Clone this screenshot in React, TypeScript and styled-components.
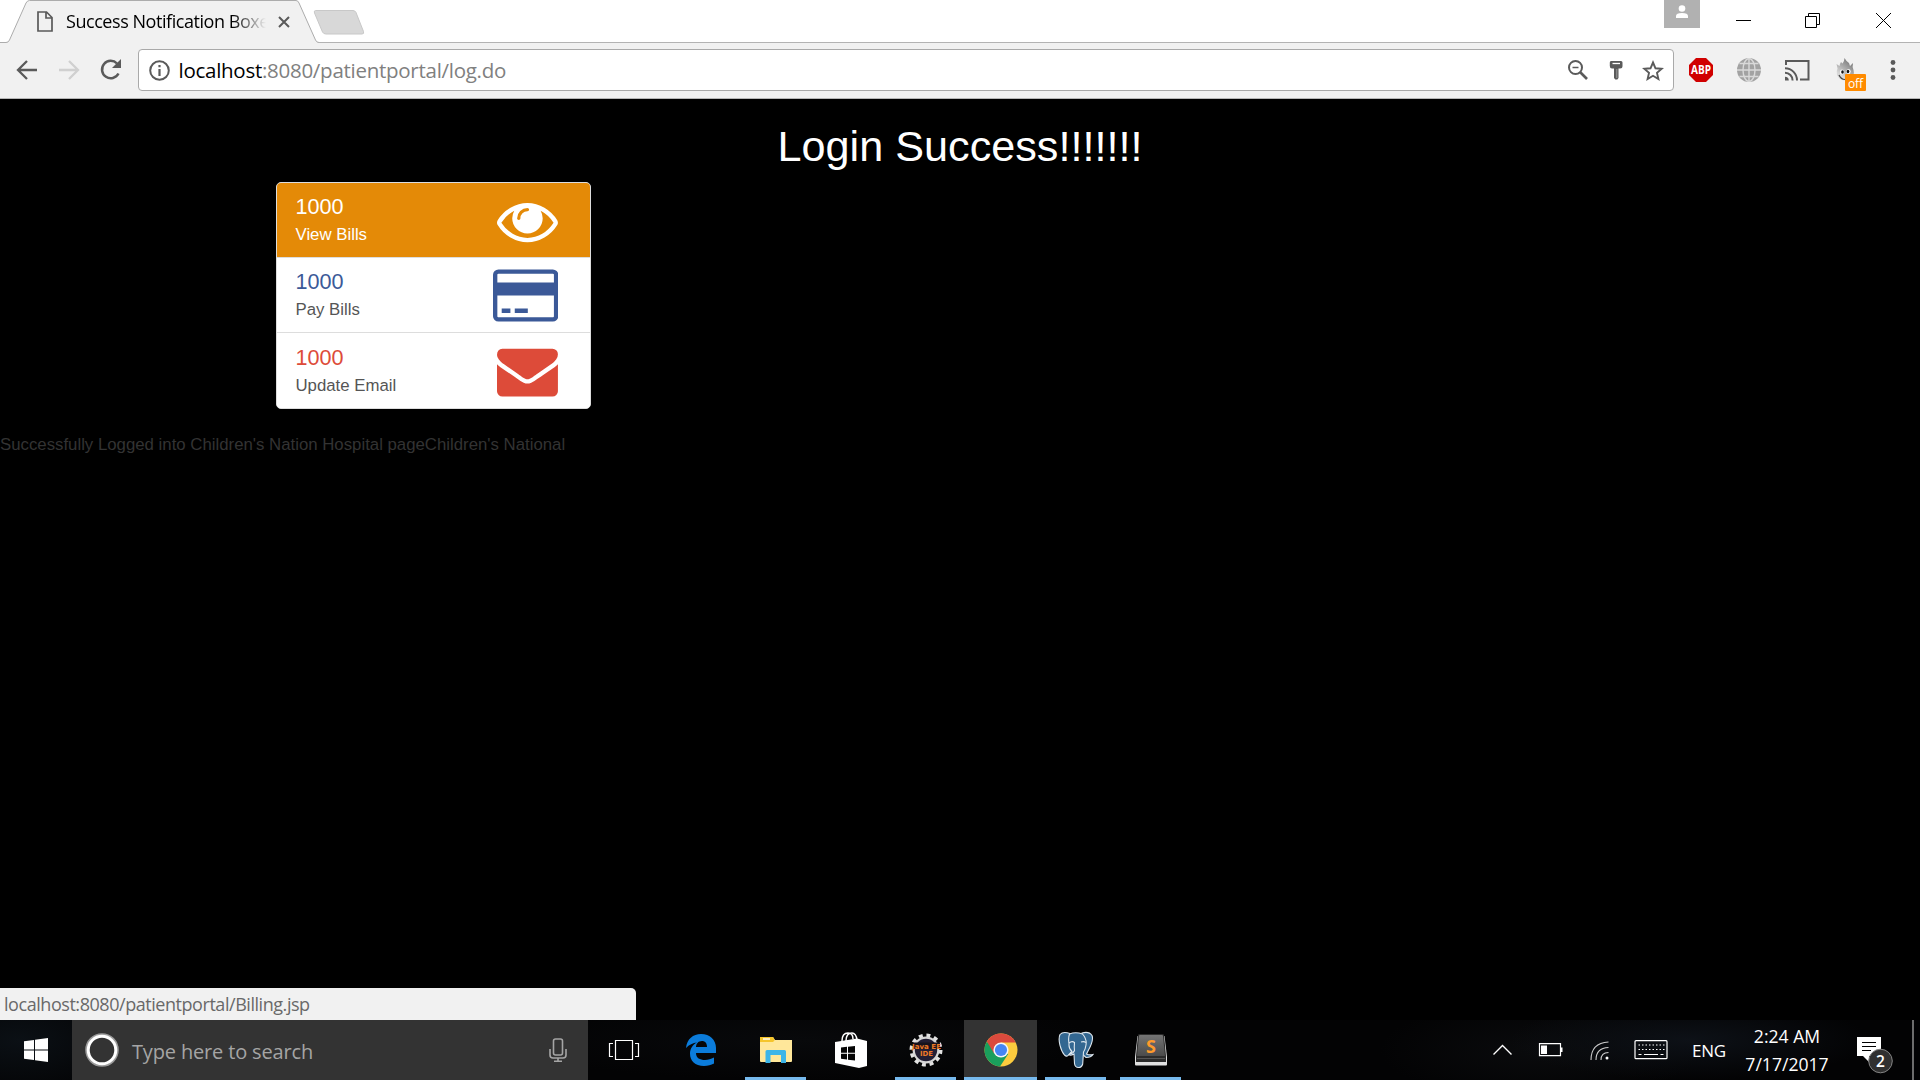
import React from "react";
import styled, { createGlobalStyle } from "styled-components";

const Global = createGlobalStyle`
  * { box-sizing: border-box; }
  body { margin: 0; background: #000; overflow: hidden; }
  svg { display: block; flex: none; }
`;

const ui = `"Open Sans", "Noto Sans", sans-serif`;
const arial = `"Liberation Sans", Arial, sans-serif`;

const Screen = styled.div`
  width: 1920px;
  height: 1080px;
  display: flex;
  flex-direction: column;
  background: #000;
  overflow: hidden;
`;

/* ---------- browser chrome ---------- */

const TabStrip = styled.header`
  height: 43px;
  flex: none;
  display: flex;
  align-items: flex-start;
  background: #fff;
  box-shadow: inset 0 -1px 0 #b3b3b3;
`;

const Tab = styled.div`
  position: relative;
  width: 320px;
  height: 43px;
  padding-left: 37px;
  display: flex;
  align-items: center;
`;

const TabShape = styled.svg`
  position: absolute;
  left: 0;
  top: 0;
`;

const TabTitle = styled.span`
  position: relative;
  width: 204px;
  margin-left: 13px;
  padding-bottom: 2px;
  white-space: nowrap;
  font: 18px/28px ${ui};
  letter-spacing: -0.45px;
  color: #000;
  mask-image: linear-gradient(to right, #000 166px, transparent 200px);
`;

const Lifted = styled.div`
  position: relative;
`;

const TabClose = styled(Lifted)`
  margin-left: 8px;
`;

const NewTab = styled.svg`
  margin: 9px 0 0 -7px;
`;

const WindowButtons = styled.div`
  margin-left: auto;
  display: flex;
  align-items: flex-start;
`;

const ProfileButton = styled.div`
  width: 36px;
  height: 28px;
  margin-right: 9px;
  background: #b1b1b1;
  display: flex;
  justify-content: center;
  padding-top: 5px;
`;

const WindowButton = styled.div<{ $w: number }>`
  width: ${(p) => p.$w}px;
  height: 41px;
  display: flex;
  align-items: center;
  justify-content: center;
`;

const Toolbar = styled.div`
  height: 56px;
  flex: none;
  display: flex;
  align-items: center;
  background: #f1f1f1;
  border-bottom: 1px solid #b6b6b6;
  padding: 0 15px 1px 16px;
`;

const NavButtons = styled.div`
  display: flex;
  flex: none;
  align-items: center;
  gap: 20px;
  width: 122px;
`;

const AddressBar = styled.div`
  width: 1536px;
  flex: none;
  height: 42px;
  display: flex;
  align-items: center;
  background: #fff;
  border: 1px solid #a9a9a9;
  border-radius: 4px;
  padding: 0 9px 0 10px;
`;

const Url = styled.span`
  margin-left: 8.5px;
  font: 20.5px/30px ${ui};
  letter-spacing: -0.27px;
  color: #808080;
  b { color: #000; font-weight: 400; }
`;

const AddressActions = styled.div`
  margin-left: auto;
  display: flex;
  align-items: center;
`;

const Extensions = styled.div`
  flex: 1;
  display: flex;
  align-items: center;
  gap: 24px;
  padding-left: 15px;
`;

const FlameSlot = styled.div`
  margin: 9px -10px 0 2px;
`;

/* ---------- page ---------- */

const Page = styled.main`
  flex: 1;
  display: flex;
  flex-direction: column;
  align-items: flex-start;
  font-family: ${arial};
`;

const Heading = styled.h1`
  align-self: center;
  margin: 24px 0 12px;
  font-size: 43.2px;
  line-height: 47px;
  font-weight: 400;
  color: #fff;
`;

const Menu = styled.div`
  width: 315px;
  margin-left: 276px;
  border: 1px solid #ddd;
  border-radius: 5px;
  background: #fff;
  overflow: hidden;
`;

const MenuItem = styled.a<{ $fill?: boolean; $h: number; $top: number }>`
  height: ${(p) => p.$h}px;
  display: flex;
  justify-content: space-between;
  padding: ${(p) => p.$top}px 32px 0 18.5px;
  background: ${(p) => (p.$fill ? "#e48a07" : "#fff")};
  color: ${(p) => (p.$fill ? "#fff" : "#555")};
  & + & { border-top: 1px solid #ddd; }
`;

const Count = styled.h4<{ $c: string }>`
  margin: 0;
  font-size: 21.6px;
  line-height: 25px;
  font-weight: 400;
  color: ${(p) => p.$c};
`;

const Label = styled.p`
  margin: 4px 0 0;
  font-size: 16.8px;
  line-height: 24px;
`;

const MenuIcon = styled.svg<{ $c: string; $up: number }>`
  margin-top: ${(p) => -p.$up}px;
  fill: ${(p) => p.$c};
`;

const Footnote = styled.p`
  margin: 24px 0 0;
  font-size: 16.8px;
  line-height: 24px;
  color: #333;
`;

const StatusBubble = styled.div`
  width: 636px;
  height: 32px;
  margin-top: auto;
  padding-left: 4px;
  background: #f1f1f1;
  border-top-right-radius: 5px;
  font: 18px/32px ${ui};
  letter-spacing: -0.45px;
  color: #696969;
`;

/* ---------- taskbar ---------- */

const Taskbar = styled.footer`
  height: 60px;
  flex: none;
  display: flex;
  color: #fff;
  font-family: ${ui};
  background:
    radial-gradient(ellipse 180px 40px at 1690px 20px, #0d1117, transparent),
    radial-gradient(ellipse 160px 50px at 1540px 30px, #0a0b0d, transparent),
    radial-gradient(ellipse 130px 60px at 20px 20px, #0b1015, transparent),
    radial-gradient(ellipse 300px 40px at 800px 20px, #08090b, transparent),
    #030304;
`;

const Start = styled.div`
  width: 72px;
  display: flex;
  align-items: center;
  justify-content: center;
`;

const Search = styled.div`
  width: 516px;
  background: #333;
  display: flex;
  align-items: center;
  padding: 0 21px 0 13px;
`;

const Placeholder = styled.span`
  flex: 1;
  margin: 2px 0 0 13px;
  font-size: 20px;
  letter-spacing: -0.16px;
  color: #a5a5a5;
`;

const Slot = styled.div<{ $open?: boolean; $active?: boolean; $nudge?: number }>`
  width: 75px;
  padding-right: ${(p) => p.$nudge ?? 0}px;
  display: flex;
  align-items: center;
  justify-content: center;
  background:
    linear-gradient(#76b9ed, #76b9ed) center bottom /
      ${(p) => (p.$active ? 73 : p.$open ? 61 : 0)}px 3px no-repeat,
    linear-gradient(${(p) => (p.$active ? "#333, #333" : "transparent, transparent")})
      center / 73px 100% no-repeat;
`;

const Tray = styled.div`
  margin-left: auto;
  display: flex;
  align-items: center;
`;

const Language = styled.span`
  width: 34px;
  margin-left: 24px;
  font-size: 17px;
  letter-spacing: -0.3px;
`;

const Clock = styled.div`
  width: 100px;
  margin-left: 11px;
  text-align: center;
  font-size: 17.6px;
  line-height: 28px;
  padding-bottom: 1px;
  white-space: nowrap;
`;

const Notifications = styled.div`
  padding-top: 8px;
`;

const Edge = styled.div`
  width: 2px;
  height: 60px;
  margin: 0 6px 0 19px;
  background: #6d6d6d;
`;

const g = "#5a5a5a";

const Extension = {
  abp: (
    <svg width="24" height="24" viewBox="0 0 24 24">
      <path d="M7 0h10l7 7v10l-7 7H7l-7-7V7z" fill="#d00000" />
      <text x="12" y="16.2" textAnchor="middle" fontFamily="Open Sans" fontWeight="700" fontSize="11.5" textLength="20" lengthAdjust="spacingAndGlyphs" fill="#fff">ABP</text>
    </svg>
  ),
  globe: (
    <svg width="24" height="24" viewBox="0 0 24 24">
      <circle cx="12" cy="12" r="12" fill="#a2a2a2" />
      <g fill="none" stroke="#d9d9d9" strokeWidth="1.4">
        <ellipse cx="12" cy="12" rx="6" ry="11.5" />
        <path d="M12 0v24M0 12h24M2.5 5.5h19M2.5 18.5h19" />
      </g>
    </svg>
  ),
  cast: (
    <svg width="25" height="21" viewBox="0 0 25 21" fill="none" stroke={g} strokeWidth="2">
      <path d="M1 5V1h22.5v18.5H15" />
      <path d="M0 8.3A12 12 0 0 1 12 20.5M0 12.7a7.7 7.7 0 0 1 7.6 7.8" />
      <path d="M0 16.8a3.8 3.8 0 0 1 3.8 3.7H0z" fill={g} stroke="none" />
    </svg>
  ),
  hola: (
    <svg width="31" height="34" viewBox="0 0 31 34">
      <defs>
        <linearGradient id="flame" x1=".8" y1="0" x2=".3" y2=".8">
          <stop offset="0" stopColor="#6c6c6c" />
          <stop offset="1" stopColor="#d8d8d8" />
        </linearGradient>
      </defs>
      <path d="M8.500 0Q10 3 13 5l1 3 3-3q-1 4 .5 7 1 3-.5 6-2 4.500-8 4.500-6-.5-8-5.500-1-4 .5-6.500Q1 8 .5 6l3 2q.2-2 1.500-4l1.500 1.500Q8.500 3 8.500 0z" fill="url(#flame)" />
      <ellipse cx="6" cy="14" rx="2.200" ry="2.600" fill="#fff" />
      <ellipse cx="12.500" cy="13.500" rx="2.200" ry="2.600" fill="#fff" />
      <ellipse cx="6.500" cy="14" rx="1.300" ry="1.800" fill="#111" />
      <ellipse cx="12" cy="13.500" rx="1.300" ry="1.800" fill="#111" />
      <path d="M3 17q2 4.500 6 4.500" fill="none" stroke="#444" strokeWidth="1.200" />
      <rect x="9" y="16" width="21" height="17" rx="1" fill="#ff8b00" />
      <text x="19.5" y="30" textAnchor="middle" fontFamily="Open Sans" fontSize="12" textLength="15" fill="#fff">off</text>
    </svg>
  ),
};

function BrowserTop() {
  return (
    <>
      <TabStrip>
        <Tab>
          <TabShape width="322" height="43">
            <path d="M0 42.5H6q2.5 0 3.5-2.5L26 3Q27.300 .5 29.500 .5H296q2 0 3 2.500L315.500 40q1 2.500 3.500 2.500V43H0z" fill="#f1f1f1" />
            <path d="M0 42.500H6q2.500 0 3.500-2.500L26 3Q27.300 .5 29.500 .5H296q2 0 3 2.500L315.500 40q1 2.500 3.500 2.500" fill="none" stroke="#acacac" />
          </TabShape>
          <Lifted>
            <svg width="16" height="21" viewBox="0 0 16 21" fill="none" stroke={g} strokeWidth="1.7">
              <path d="M1 1h8.500L15 6.500V20H1zM9 1v6h6" />
            </svg>
          </Lifted>
          <TabTitle>Success Notification Boxe</TabTitle>
          <TabClose>
            <svg width="12" height="12" viewBox="0 0 12 12" stroke={g} strokeWidth="2">
              <path d="M1 1l10 10M11 1L1 11" />
            </svg>
          </TabClose>
        </Tab>
        <NewTab width="52" height="27">
          <path d="M2.500 1.500H40q2 0 3 2L50.500 22.500q.8 2.500-1.500 2.500H13q-2.500 0-3.500-2L1.500 4q-.8-2.500 1-2.500z" fill="#d8d8d8" stroke="#c8c8c8" />
        </NewTab>
        <WindowButtons>
          <ProfileButton>
            <svg width="14" height="14" viewBox="0 0 14 14" fill="#fff">
              <circle cx="7" cy="3.500" r="3.300" />
              <path d="M1 13v-2q0-3 6-3t6 3v2z" />
            </svg>
          </ProfileButton>
          <WindowButton $w={69}>
            <svg width="15" height="15"><path d="M0 7.500h15" stroke="#000" /></svg>
          </WindowButton>
          <WindowButton $w={69}>
            <svg width="15" height="15" fill="none" stroke="#000">
              <path d="M.5 3.500h11v11H.5zM3.500 3.500v-3h11v11h-3" />
            </svg>
          </WindowButton>
          <WindowButton $w={73}>
            <svg width="15" height="15" stroke="#000"><path d="M0 0l15 15M15 0L0 15" /></svg>
          </WindowButton>
        </WindowButtons>
      </TabStrip>

      <Toolbar>
        <NavButtons>
          <svg width="22" height="20" viewBox="0 0 22 20" fill="none" stroke={g} strokeWidth="2.300">
            <path d="M21 10H3M11 1l-9 9 9 9" />
          </svg>
          <svg width="22" height="20" viewBox="0 0 22 20" fill="none" stroke="#d0d0d0" strokeWidth="2.300">
            <path d="M1 10h18M11 1l9 9-9 9" />
          </svg>
          <svg width="22" height="22" viewBox="0 0 22 22">
            <path d="M18.500 14.500A8.700 8.700 0 1 1 17 4.500" fill="none" stroke={g} strokeWidth="2.500" />
            <path d="M21 0v9h-9z" fill={g} />
          </svg>
        </NavButtons>
        <AddressBar>
          <svg width="21" height="21" viewBox="0 0 21 21">
            <circle cx="10.500" cy="10.500" r="9.300" fill="none" stroke={g} strokeWidth="2" />
            <path d="M9.400 5h2.200v2.200H9.400zM9.400 9h2.200v7H9.400z" fill={g} />
          </svg>
          <Url><b>localhost</b>:8080/patientportal/log.do</Url>
          <AddressActions>
            <svg width="20" height="20" viewBox="0 0 20 20" fill="none" stroke={g}>
              <circle cx="7.500" cy="7.500" r="6.500" strokeWidth="2" />
              <path d="M4.500 7.500h6" strokeWidth="1.500" />
              <path d="M12 12l7 7" strokeWidth="2.600" />
            </svg>
            <svg width="54" height="20" viewBox="0 0 54 20">
              <path d="M23 1h10q1.500 0 1.500 1.500V6q0 2.500-2.500 2.500h-8Q21.800 8.500 21.800 6V2.500Q21.800 1 23 1zM26 8h4.500v10l-1.200 1.500h-2L26 18z" fill={g} />
              <path d="M24.500 3.500h7.500" stroke="#fff" strokeWidth="1.300" />
              <path d="M28.800 9v9" stroke="#999" />
            </svg>
            <svg width="22" height="21" viewBox="0 0 22 21" fill="none" stroke={g} strokeWidth="1.900">
              <path d="M11 2.500l2.500 5.800 6.200.5-4.700 4.100 1.400 6.100L11 15.800 5.600 19 7 12.900 2.300 8.800l6.200-.5z" />
            </svg>
          </AddressActions>
        </AddressBar>
        <Extensions>
          {Extension.abp}
          {Extension.globe}
          {Extension.cast}
          <FlameSlot>{Extension.hola}</FlameSlot>
          <svg width="24" height="20" fill={g}>
            <circle cx="12" cy="2.500" r="2.400" />
            <circle cx="12" cy="10" r="2.400" />
            <circle cx="12" cy="17.500" r="2.400" />
          </svg>
        </Extensions>
      </Toolbar>
    </>
  );
}

const items = [
  {
    label: "View Bills", count: "1000", color: "#fff", fill: true, h: 74, top: 11, w: 1792, up: 4,
    d: "M1664 960q-152-236-381-353 61 104 61 225 0 185-131.5 316.5t-316.5 131.5-316.5-131.5-131.5-316.5q0-121 61-225-229 117-381 353 133 205 333.5 326.5t434.5 121.5 434.5-121.5 333.5-326.5zm-720-384q0-20-14-34t-34-14q-125 0-214.5 89.5t-89.5 214.5q0 20 14 34t34 14 34-14 14-34q0-86 61-147t147-61q20 0 34-14t14-34zm848 384q0 34-20 69-140 230-376.5 368.5t-499.5 138.5-499.5-139-376.5-368q-20-35-20-69t20-69q140-229 376.5-368t499.5-139 499.5 139 376.5 368q20 35 20 69z",
  },
  {
    label: "Pay Bills", count: "1000", color: "#3b5998", fill: false, h: 75, top: 11, w: 1920, up: 4,
    d: "M1760 128q66 0 113 47t47 113v1216q0 66-47 113t-113 47h-1600q-66 0-113-47t-47-113v-1216q0-66 47-113t113-47h1600zm-1600 128q-13 0-22.5 9.5t-9.5 22.5v224h1664v-224q0-13-9.5-22.5t-22.5-9.5h-1600zm1600 1280q13 0 22.5-9.5t9.5-22.5v-608h-1664v608q0 13 9.5 22.5t22.5 9.5h1600zm-1504-128v-128h256v128h-256zm384 0v-128h384v128h-384z",
  },
  {
    label: "Update Email", count: "1000", color: "#dd4b39", fill: false, h: 76, top: 12, w: 1792, up: 5,
    d: "M1792 710v794q0 66-47 113t-113 47h-1472q-66 0-113-47t-47-113v-794q44 49 101 87 362 246 497 345 57 42 92.5 65.5t94.5 48 110 24.5h2q51 0 110-24.5t94.5-48 92.5-65.5q170-123 498-345 57-39 100-87zm0-294q0 79-49 151t-122 123q-376 261-468 325-10 7-42.5 31t-54 38.5-52 32.5-57.5 27-50 9h-2q-23 0-50-9t-57.5-27-52-32.5-54-38.5-42.5-31q-91-64-262-182.5t-205-142.5q-62-42-117-115.5t-55-136.5q0-78 41.5-130t118.5-52h1472q65 0 112.5 47t47.5 113z",
  },
];

function TaskApps() {
  return (
    <>
      <Slot $nudge={4}>
        <svg width="32" height="22" viewBox="0 0 32 22" fill="none" stroke="#fff" strokeWidth="1.200">
          <path d="M7.500 1.500h17v19h-17zM5 4.500H1.500v13H5M27 4.500h3.500v13H27" />
        </svg>
      </Slot>
      <Slot>
        <svg width="30" height="32" viewBox="0 0 30 32">
          <path d="M0 14C1 5 7 0 15 0c9 0 15 6 15 14v5H10c0 5 4 7 9 7 3 0 6-1 9-2.500v6C25 31 22 32 18 32 9 32 4 27 4 19.500c0-5 3-9 7-11C7 9 3 10.500 0 14zm10-1h11c0-4-2-6-5-6-4 0-6 3-6 6z" fill="#0b7cdb" />
        </svg>
      </Slot>
      <Slot $open>
        <svg width="32" height="28" viewBox="0 0 32 28">
          <path d="M0 1.500Q0 1 1 1h12l2 3h17v21q0 1-1 1H1q-1 0-1-1z" fill="#ffe79a" />
          <path d="M0 1h13q1.500 1.500 1.500 3.500L13 6H0z" fill="#f5c52c" />
          <path d="M3 3h7" stroke="#fff" strokeWidth="1.400" />
          <path d="M5.500 27V15.500q0-1.500 1.500-1.500h17.500q1.500 0 1.500 1.500V27h-5v-8H10.500v8z" fill="#3db5e8" />
        </svg>
      </Slot>
      <Slot>
        <svg width="32" height="36" viewBox="0 0 32 36">
          <path d="M7 9q0-8 6-8 5 0 5 6M11 9q0-8 6-8 4 0 5 7" fill="none" stroke="#fff" strokeWidth="1.500" />
          <path d="M0 10l22-3.500L32 9v25l-8 2L0 31z" fill="#fff" />
          <path d="M6 15.500l6-.7v6H6zM13 14.700l7-.8v6.900h-7zM6 21.800h6v5.700l-6-.7zM13 21.800h7v6.700l-7-.8z" fill="#050505" />
        </svg>
      </Slot>
      <Slot $open>
        <svg width="36" height="36" viewBox="0 0 36 36">
          <circle cx="18" cy="18" r="14.600" fill="none" stroke="#e2e2e2" strokeWidth="3.800" strokeDasharray="3.900 3.745" />
          <circle cx="18" cy="18" r="12.300" fill="#221e33" stroke="#d6d6d6" strokeWidth="2.200" />
          <path d="M5 10.500h27v6.500H5z" fill="#17131c" />
          <g fontFamily="DejaVu Sans" fontWeight="700" fill="#ee7a26">
            <text x="4" y="16.500" fontSize="7" textLength="29" lengthAdjust="spacingAndGlyphs">Java EE</text>
            <text x="12" y="24" fontSize="7" textLength="13" lengthAdjust="spacingAndGlyphs">IDE</text>
          </g>
        </svg>
      </Slot>
      <Slot $active>
        <svg width="34" height="34" viewBox="0 0 34 34">
          <circle cx="17" cy="17" r="16.500" fill="#fccb3e" />
          <path d="M17 17L2.700 8.700A16.500 16.500 0 0 0 16 33.500L24.200 21z" fill="#1a9f5c" />
          <path d="M17 9.500h14.700A16.500 16.500 0 0 0 2.900 8.400L9.800 20z" fill="#da4a3d" />
          <circle cx="17" cy="17" r="7.600" fill="#f5f5f5" />
          <circle cx="17" cy="17" r="6.100" fill="#4586f3" />
        </svg>
      </Slot>
      <Slot $open>
        <svg width="36" height="38" viewBox="0 0 36 38" stroke="#dfe8ef" strokeWidth="1.100" fill="#336791">
          <path d="M24 2Q31 0 34 4.500 36 9 30 20l-1.500 3q3 1.500 6.500.5-2 3-7 3L23 22z" />
          <path d="M12 2.500Q5 0 2 3.500C-.5 9 3 20 6.500 24q2.500 2.500 4.500-.5L14 20z" />
          <path d="M11.500 3q6-2.500 13 0Q29 8 28 14q-.5 4-2.500 7l-.8 12q-1 3.500-4.200 3.500-3.500 0-4-4L16 23q-4 2-5 .5 2-1 3-3-3.500-3-3-8Q10 7 11.500 3z" />
          <path d="M11 12q3-2.500 5.500-.5-.5 5 0 8-1 3-4.500 3M23 11q3-1 5 .5" fill="none" />
        </svg>
      </Slot>
      <Slot $open>
        <svg width="34" height="32" viewBox="0 0 34 32">
          <defs>
            <linearGradient id="key" x2="0" y2="1">
              <stop offset="0" stopColor="#747474" />
              <stop offset="1" stopColor="#4b4b4b" />
            </linearGradient>
          </defs>
          <path d="M3.500 2L1 23v7.500q0 1 1 1h30q1 0 1-1V23L30.500 2z" fill="#e1e1e1" />
          <path d="M4 1q0-1 2-1h22q2 0 2 1l2 21v6H2v-6z" fill="#2b2b2b" />
          <path d="M5 2q0-1 1-1h22q1 0 1 1l2 20H3z" fill="url(#key)" />
          <path d="M3 24.500h28" stroke="#555" />
          <text x="17" y="18.500" textAnchor="middle" fontFamily="Open Sans" fontWeight="700" fontSize="18" fill="#ff9a2b">S</text>
        </svg>
      </Slot>
    </>
  );
}

export default function App() {
  return (
    <Screen>
      <Global />
      <BrowserTop />
      <Page>
        <Heading>Login Success!!!!!!!</Heading>
        <Menu>
          {items.map((it) => (
            <MenuItem key={it.label} $fill={it.fill} $h={it.h} $top={it.top}>
              <div>
                <Count $c={it.color}>{it.count}</Count>
                <Label>{it.label}</Label>
              </div>
              <MenuIcon $c={it.color} $up={it.up} width={it.w * 0.034} height="61" viewBox={`0 0 ${it.w} 1792`}>
                <path d={it.d} />
              </MenuIcon>
            </MenuItem>
          ))}
        </Menu>
        <Footnote>Successfully Logged into Children's Nation Hospital pageChildren's National</Footnote>
        <StatusBubble>localhost:8080/patientportal/Billing.jsp</StatusBubble>
      </Page>
      <Taskbar>
        <Start>
          <svg width="24" height="24" viewBox="0 0 24 24" fill="#fff">
            <path d="M0 3.300L10 2v9.500H0zM11 1.800L24 0v11.500H11zM0 12.500h10V22L0 20.700zM11 12.500h13V24l-13-1.800z" />
          </svg>
        </Start>
        <Search>
          <svg width="34" height="34" viewBox="0 0 34 34" fill="none">
            <circle cx="17" cy="17" r="15.800" stroke="#9a9a9a" strokeWidth="2" />
            <circle cx="17" cy="17" r="13.800" stroke="#fff" strokeWidth="3" />
          </svg>
          <Placeholder>Type here to search</Placeholder>
          <svg width="18" height="24" viewBox="0 0 18 24" fill="none" stroke="#a5a5a5" strokeWidth="1.600">
            <rect x="4.500" y="1" width="9" height="16" rx="2" />
            <path d="M1 11v6q0 3 3 3h10q3 0 3-3v-6M9 20v3M5 23.200h8" />
          </svg>
        </Search>
        <TaskApps />
        <Tray>
          <svg width="19" height="12" fill="none" stroke="#fff" strokeWidth="1.400"><path d="M.5 10.500l9-9 9 9" /></svg>
          <svg width="78" height="14" viewBox="0 0 78 14">
            <path d="M27.500 .7h21v12h-21z" fill="none" stroke="#fff" strokeWidth="1.200" />
            <path d="M29 2.500h6v8.500h-6zM49 4.500h1.500V9H49z" fill="#fff" />
          </svg>
          <svg width="19" height="22" viewBox="0 -2 19 22" fill="none" stroke="#fff" strokeWidth="1.100">
            <path d="M1 19Q1 2 18.500 1M6 19Q6 7 18.500 6.500M11 19q0-7.500 7.500-7.500" stroke="#ccc" />
            <circle cx="17" cy="17" r="1.500" fill="#fff" stroke="none" />
          </svg>
          <svg width="59" height="20" viewBox="0 0 59 20" fill="none" stroke="#fff" strokeWidth="1.200">
            <rect x="26" y=".7" width="32" height="18" rx="1" />
            <path d="M29.500 5h26M29.500 9.500h26" strokeDasharray="1.500 2" />
            <path d="M29.500 14.500h3M35 14.500h14M51.500 14.500h3" />
          </svg>
          <Language>ENG</Language>
          <Clock>
            2:24 AM
            <br />
            7/17/2017
          </Clock>
          <Notifications>
            <svg width="56" height="40" viewBox="0 0 56 40">
              <path d="M20 3h24v19H32v6l-6-6h-6z" fill="#fff" />
              <path d="M25 8.500h14M25 12.500h14M25 16.500h9" stroke="#000" strokeWidth="1.200" />
              <circle cx="43.500" cy="27" r="11.800" fill="#303030" stroke="#858585" />
              <text x="43.500" y="32.500" textAnchor="middle" fontFamily="Open Sans" fontWeight="600" fontSize="15.500" fill="#fff">2</text>
            </svg>
          </Notifications>
          <Edge />
        </Tray>
      </Taskbar>
    </Screen>
  );
}
